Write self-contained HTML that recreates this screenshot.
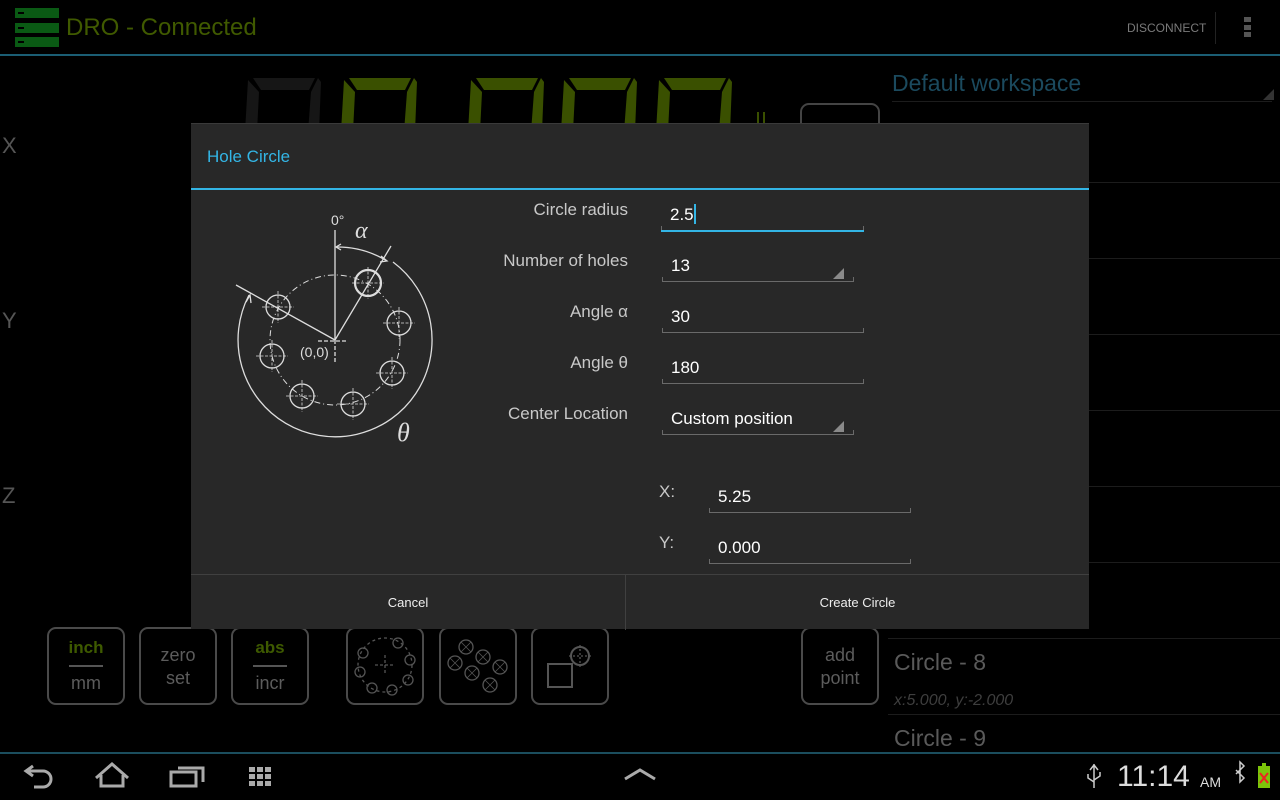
<!DOCTYPE html>
<html><head><meta charset="utf-8"><style>
*{margin:0;padding:0;box-sizing:border-box}
body{width:1280px;height:800px;background:#000;position:relative;overflow:hidden;font-family:"Liberation Sans",sans-serif}
.a{position:absolute}
.btn{position:absolute;top:627px;width:78px;height:78px;border:2px solid #4a4a4a;border-radius:9px;color:#5c5c5c;text-align:center;font-size:18px}
.div{position:absolute;left:888px;width:392px;height:1px;background:#1c1c1c}
.lbl{position:absolute;right:652px;color:#c8c8c8;font-size:17px;text-align:right}
.fld{position:absolute;border-bottom:1px solid #6a6a6a;color:#fff;font-size:17px;padding-left:9px}
.fld:before,.fld:after{content:"";position:absolute;bottom:0;width:1px;height:4px;background:#6a6a6a}
.fld:before{left:0}.fld:after{right:0}
.tri{position:absolute;right:10px;bottom:2px;width:0;height:0;border-left:11px solid transparent;border-bottom:11px solid #8a8a8a}
</style></head><body>
<!-- header -->
<div class="a" style="left:15px;top:8px;width:44px;height:10px;background:#0a5a14"></div>
<div class="a" style="left:15px;top:23px;width:44px;height:10px;background:#0a5a14"></div>
<div class="a" style="left:15px;top:37px;width:44px;height:10px;background:#0a5a14"></div>
<div class="a" style="left:18px;top:12px;width:6px;height:2px;background:#000;box-shadow:0 15px 0 #000,0 29px 0 #000"></div>
<div class="a" style="left:66px;top:14px;color:#405a00;font-size:24px">DRO - Connected</div>
<div class="a" style="left:1127px;top:21px;color:#7a7a7a;font-size:12px">DISCONNECT</div>
<div class="a" style="left:1215px;top:12px;width:1px;height:32px;background:#222"></div>
<div class="a" style="left:1244px;top:17px;width:7px;height:5px;background:#555;box-shadow:0 8px 0 #555,0 15px 0 #555"></div>
<div class="a" style="left:0;top:54px;width:1280px;height:2px;background:#1b5e74"></div>
<!-- seven seg -->
<svg class="a" style="left:0;top:0" width="1280" height="130">
<defs><g id="d"><path d="M8 78h62l-6 12h-48z"/><path d="M3 80l11 12-2 40h-12z"/><path d="M66 92l7-14l3 4l-2 50h-11z"/></g></defs>
<use href="#d" x="245" fill="#161616"/>
<g fill="#3a5000"><use href="#d" x="341"/><use href="#d" x="468"/><use href="#d" x="561"/><use href="#d" x="656"/>
<rect x="757" y="112" width="2" height="12"/><rect x="763" y="112" width="2" height="12"/></g>
<rect x="801" y="104" width="78" height="30" rx="8" fill="none" stroke="#444" stroke-width="2"/>
</svg>
<div class="a" style="left:2px;top:133px;color:#555;font-size:22px">X</div>
<div class="a" style="left:2px;top:308px;color:#555;font-size:22px">Y</div>
<div class="a" style="left:2px;top:483px;color:#555;font-size:22px">Z</div>
<!-- right list -->
<div class="a" style="left:892px;top:70px;color:#1b4a5e;font-size:23px">Default workspace</div>
<div class="a" style="left:892px;top:101px;width:380px;height:1px;background:#1c1c1c"></div>
<div class="a" style="left:1263px;top:89px;width:0;height:0;border-left:11px solid transparent;border-bottom:11px solid #333"></div>
<div class="div" style="top:182px"></div><div class="div" style="top:258px"></div><div class="div" style="top:334px"></div><div class="div" style="top:410px"></div><div class="div" style="top:486px"></div><div class="div" style="top:562px"></div><div class="div" style="top:638px"></div><div class="div" style="top:714px"></div>
<div class="a" style="left:894px;top:649px;color:#5a5a5a;font-size:23px">Circle - 8</div>
<div class="a" style="left:894px;top:692px;color:#3e3e3e;font-size:16px;font-style:italic">x:5.000, y:-2.000</div>
<div class="a" style="left:894px;top:725px;color:#5a5a5a;font-size:23px">Circle - 9</div>
<!-- buttons -->
<div class="btn" style="left:47px"><div style="color:#3e5a00;font-weight:bold;margin-top:9px;font-size:17px">inch</div><div style="width:34px;height:2px;background:#555;margin:7px auto 6px"></div><div>mm</div></div>
<div class="btn" style="left:139px;padding-top:15px;line-height:23px">zero<br>set</div>
<div class="btn" style="left:231px"><div style="color:#3e5a00;font-weight:bold;margin-top:9px;font-size:17px">abs</div><div style="width:34px;height:2px;background:#555;margin:7px auto 6px"></div><div>incr</div></div>
<div class="btn" style="left:346px"></div><div class="btn" style="left:439px"></div><div class="btn" style="left:531px"></div>
<div class="btn" style="left:801px;padding-top:15px;line-height:23px">add<br>point</div>
<svg class="a" style="left:0;top:0" width="1280" height="800"><g fill="none" stroke="#555" stroke-width="1.3">
<circle cx="385" cy="665" r="27" stroke-dasharray="3 3"/>
<path d="M385 655v20M375 665h20" stroke-dasharray="3 2"/>
<circle cx="398" cy="643" r="5"/><circle cx="410" cy="660" r="5"/><circle cx="408" cy="680" r="5"/><circle cx="392" cy="690" r="5"/><circle cx="372" cy="688" r="5"/><circle cx="360" cy="672" r="5"/><circle cx="363" cy="653" r="5"/>
<circle cx="466" cy="647" r="7"/><circle cx="483" cy="657" r="7"/><circle cx="455" cy="663" r="7"/><circle cx="472" cy="673" r="7"/><circle cx="500" cy="667" r="7"/><circle cx="490" cy="685" r="7"/>
<path d="M461 642l10 10M471 642l-10 10M478 652l10 10M488 652l-10 10M450 658l10 10M460 658l-10 10M467 668l10 10M477 668l-10 10M495 662l10 10M505 662l-10 10M485 680l10 10M495 680l-10 10" stroke-width="0.8"/>
<rect x="548" y="664" width="24" height="23" stroke-width="2"/><circle cx="580" cy="656" r="9" stroke-width="2"/><path d="M569 656h22M580 645v22" stroke-dasharray="2 2"/>
</g></svg>
<!-- nav bar -->
<div class="a" style="left:0;top:752px;width:1280px;height:2px;background:#1b4e5e"></div>
<svg class="a" style="left:0;top:754px" width="1280" height="46"><g fill="none" stroke="#aaa" stroke-width="3">
<path d="M28 17h15a8 8 0 0 1 0 16h-9M33 12l-7 5 7 5"/>
<path d="M96 24l16-14 16 14M101 21v11h22v-11"/>
<rect x="171" y="18" width="25" height="14"/><path d="M178 14h25v14"/>
<path d="M625 25l15-9 15 9"/></g>
<g fill="#aaa"><rect x="249" y="13" width="6" height="5"/><rect x="257" y="13" width="6" height="5"/><rect x="265" y="13" width="6" height="5"/><rect x="249" y="20" width="6" height="5"/><rect x="257" y="20" width="6" height="5"/><rect x="265" y="20" width="6" height="5"/><rect x="249" y="27" width="6" height="5"/><rect x="257" y="27" width="6" height="5"/><rect x="265" y="27" width="6" height="5"/>
<rect x="1258" y="12" width="12" height="22" fill="#7cc40a"/><rect x="1262" y="9" width="4" height="3" fill="#7cc40a"/></g>
<path d="M1260 19l8 10M1268 19l-8 10" stroke="#e22" stroke-width="2"/>
<path d="M1094 10v24M1090 16l4-5 4 5M1088 20v4l6 4M1100 18v4l-6 4" stroke="#ccc" stroke-width="1.5" fill="none"/>
<path d="M1236 16l8 8-4 4v-20l4 4-8 8" stroke="#ccc" stroke-width="1.5" fill="none"/>
</svg>
<div class="a" style="left:1117px;top:760px;color:#ddd;font-size:30px">11:14</div>
<div class="a" style="left:1200px;top:774px;color:#ddd;font-size:14px">AM</div>
<!-- dialog -->
<div class="a" style="left:191px;top:123px;width:898px;height:506px;background:#282828;border-top:1px solid #3a3a3a">
<div class="a" style="left:16px;top:23px;color:#33b5e5;font-size:17px">Hole Circle</div>
<div class="a" style="left:0;top:64px;width:898px;height:2px;background:#33b5e5"></div>
<div class="a" style="left:0;top:450px;width:898px;height:1px;background:#404040"></div>
<div class="a" style="left:434px;top:451px;width:1px;height:55px;background:#404040"></div>
<div class="a" style="left:0;top:471px;width:434px;text-align:center;color:#eee;font-size:13px">Cancel</div>
<div class="a" style="left:435px;top:471px;width:463px;text-align:center;color:#eee;font-size:13px">Create Circle</div>
</div>
<svg class="a" style="left:0;top:0" width="1280" height="800"><g fill="none" stroke="#ddd" stroke-width="1.3">
<circle cx="335" cy="340" r="65" stroke-dasharray="6 3 1 3" stroke-width="1"/>
<path d="M249 295A97 97 0 1 0 393 262" />
<path d="M336 247A95 95 0 0 1 387 261"/>
<path d="M335 230v110M335 340l56-94M335 340l-99-55"/>
<path d="M318 341h28M335 340v24" stroke-dasharray="4 2"/>
<circle cx="368" cy="283" r="13" stroke-width="2.2"/>
<circle cx="278" cy="307" r="12"/><circle cx="399" cy="323" r="12"/><circle cx="392" cy="373" r="12"/><circle cx="353" cy="404" r="12"/><circle cx="302" cy="396" r="12"/><circle cx="272" cy="356" r="12"/>
<g stroke-width="0.8" stroke-dasharray="3 1.5"><path d="M352 283h32M368 267v32M262 307h32M278 291v32M383 323h32M399 307v32M376 373h32M392 357v32M337 404h32M353 388v32M286 396h32M302 380v32M256 356h32M272 340v32"/></g>
<path d="M341 244l-5 3 5 3M381 256l6 5-7 1M246 302l4-7 1 8"/>
</g>
<g fill="#ddd" font-family="Liberation Sans,sans-serif"><text x="331" y="225" font-size="14">0°</text><text x="355" y="238" font-size="24" font-style="italic" font-family="Liberation Serif,serif">α</text><text x="300" y="357" font-size="14">(0,0)</text><text x="397" y="441" font-size="26" font-style="italic" font-family="Liberation Serif,serif">θ</text></g></svg>
<div class="lbl" style="top:200px">Circle radius</div>
<div class="lbl" style="top:251px">Number of holes</div>
<div class="lbl" style="top:302px">Angle α</div>
<div class="lbl" style="top:353px">Angle θ</div>
<div class="lbl" style="top:404px">Center Location</div>
<div class="a" style="left:659px;top:482px;color:#c8c8c8;font-size:17px">X:</div>
<div class="a" style="left:659px;top:533px;color:#c8c8c8;font-size:17px">Y:</div>
<div class="fld" style="left:661px;top:204px;width:203px;height:28px;border-bottom:2px solid #33b5e5">2.5<span style="display:inline-block;width:2px;height:20px;background:#33b5e5;vertical-align:-4px"></span></div>
<div class="fld" style="left:662px;top:256px;width:192px;height:26px">13<div class="tri"></div></div>
<div class="fld" style="left:662px;top:307px;width:202px;height:26px">30</div>
<div class="fld" style="left:662px;top:358px;width:202px;height:26px">180</div>
<div class="fld" style="left:662px;top:409px;width:192px;height:26px">Custom position<div class="tri"></div></div>
<div class="fld" style="left:709px;top:487px;width:202px;height:26px">5.25</div>
<div class="fld" style="left:709px;top:538px;width:202px;height:26px">0.000</div>
</body></html>
